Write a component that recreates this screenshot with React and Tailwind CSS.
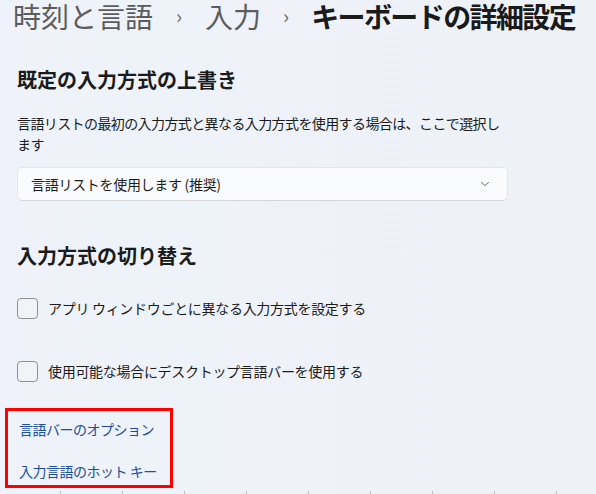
import { ChevronDown } from "lucide-react";

const font = { fontFamily: '"Noto Sans CJK JP", "Noto Sans", sans-serif' };

function Check({ label }) {
  return (
    <div className="flex items-center gap-[10px] h-[22px]">
      <span className="w-[21px] h-[21px] rounded-[4px] border border-[#8d8f93] bg-[#f1f3f7]" />
      <span className="text-[14px] text-[#1b1b1b] tracking-[-0.3px]">{label}</span>
    </div>
  );
}

export default function App() {
  return (
    <div
      className="w-[596px] h-[494px] overflow-hidden bg-gradient-to-r from-[#eff2fa] to-[#eef2f7] flex flex-col"
      style={font}
    >
      <div className="flex items-center pl-[13px] h-[34px] -mt-[1px] text-[28px] leading-[40px] whitespace-nowrap">
        <span className="text-[#5c5c5c]">時刻と言語</span>
        <span className="text-[#6a6a6a] text-[20px] mx-[23px]">›</span>
        <span className="text-[#5c5c5c]">入力</span>
        <span className="text-[#6a6a6a] text-[20px] mx-[22px]">›</span>
        <span className="text-[#1a1a1a] font-bold tracking-[-1.6px]">キーボードの詳細設定</span>
      </div>

      <div className="pl-[17px] pr-[88px]">
        <h2 className="mt-[35px] text-[20px] leading-[24px] font-bold text-[#1b1b1b]">
          既定の入力方式の上書き
        </h2>
        <p className="mt-[21px] text-[14px] leading-[21px] text-[#1b1b1b] tracking-[-0.6px] whitespace-nowrap">
          言語リストの最初の入力方式と異なる入力方式を使用する場合は、ここで選択し
          <br />
          ます
        </p>
        <div className="mt-[12px] h-[34px] w-[491px] rounded-[5px] bg-[#fafbfd] border border-[#e3e5e9] border-b-[#d3d5d9] flex items-center justify-between pl-[13px] pr-[15px]">
          <span className="text-[14px] text-[#1b1b1b] tracking-[-0.3px]">言語リストを使用します (推奨)</span>
          <ChevronDown className="w-[14px] h-[14px] text-[#5a5a5a]" strokeWidth={1.6} />
        </div>

        <h2 className="mt-[43px] text-[20px] leading-[24px] font-bold text-[#1b1b1b]">
          入力方式の切り替え
        </h2>
        <div className="mt-[29px]">
          <Check label="アプリ ウィンドウごとに異なる入力方式を設定する" />
        </div>
        <div className="mt-[41px]">
          <Check label="使用可能な場合にデスクトップ言語バーを使用する" />
        </div>
      </div>

      <div className="ml-[5px] mt-[26px] w-[168px] h-[81px] border-[3px] border-[#ff0000] flex flex-col justify-between pl-[11px] pt-[8px] pb-[4px]">
        <span className="text-[14px] leading-[20px] text-[#1c4f9c] tracking-[-0.5px]">言語バーのオプション</span>
        <span className="text-[14px] leading-[20px] text-[#1c4f9c] tracking-[-0.5px]">入力言語のホット キー</span>
      </div>

      <div className="flex mt-[3px] pl-[60px] gap-[61px]">
        {[0, 1, 2, 3, 4, 5, 6, 7, 8].map((i) => (
          <span key={i} className="w-px h-[3px] bg-[#b9bcc2]" />
        ))}
      </div>
    </div>
  );
}
